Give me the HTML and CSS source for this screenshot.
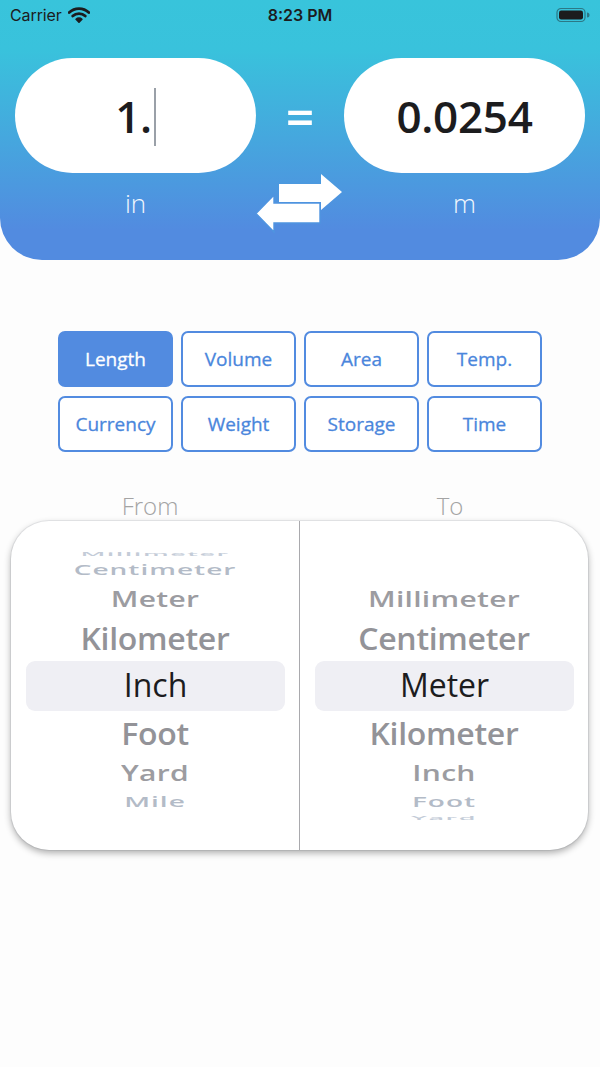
FILE: index.html
```html
<!DOCTYPE html>
<html>
<head>
<meta charset="utf-8">
<link rel="stylesheet" href="styles.css">
</head>
<body>
<div class="header">
  <div class="status">
    <div class="status-left">
      <span class="carrier">Carrier</span>
      <svg class="wifi" width="22" height="16" viewBox="0 0 22 16">
        <path d="M1.2 5.6 A14 14 0 0 1 20.8 5.6" fill="none" stroke="#1c1c1e" stroke-width="2.8" stroke-linecap="round"/>
        <path d="M4.7 9.1 A9 9 0 0 1 17.3 9.1" fill="none" stroke="#1c1c1e" stroke-width="2.8" stroke-linecap="round"/>
        <path d="M8.1 12.3 A4.2 4.2 0 0 1 13.9 12.3 L11 15.2 Z" fill="#1c1c1e" stroke="#1c1c1e" stroke-width="1.6" stroke-linejoin="round"/>
      </svg>
    </div>
    <div class="time">8:23 PM</div>
    <div class="status-right">
      <svg width="34" height="16" viewBox="0 0 34 16">
        <rect x="1" y="1.5" width="28" height="13" rx="4" fill="none" stroke="#1c1c1e" stroke-opacity="0.45" stroke-width="1.2"/>
        <rect x="3" y="3.5" width="24" height="9" rx="2.2" fill="#1c1c1e"/>
        <path d="M31 5.5 a2.4 2.4 0 0 1 0 5 z" fill="#1c1c1e" fill-opacity="0.45"/>
      </svg>
    </div>
  </div>

  <div class="values">
    <div class="pill"><span class="val">1.</span><span class="caret"></span></div>
    <div class="equals">=</div>
    <div class="pill"><span class="val">0.0254</span></div>
  </div>

  <div class="units">
    <div class="unit">in</div>
    <svg class="swap" width="88" height="62" viewBox="0 0 88 62">
      <polygon points="23,11 65,11 65,1 86,19 65,37 65,29 23,29" fill="#ffffff"/>
      <polygon points="64,30 18,30 18,22 0,40.5 18,59 18,50 64,50" fill="#ffffff" stroke="#4f94e0" stroke-width="1.4" stroke-linejoin="miter"/>
    </svg>
    <div class="unit">m</div>
  </div>
</div>

<div class="categories">
  <div class="cat active">Length</div>
  <div class="cat">Volume</div>
  <div class="cat">Area</div>
  <div class="cat">Temp.</div>
  <div class="cat">Currency</div>
  <div class="cat">Weight</div>
  <div class="cat">Storage</div>
  <div class="cat">Time</div>
</div>

<div class="dir-labels">
  <div class="dir">From</div>
  <div class="dir">To</div>
</div>

<div class="picker">
  <div class="wheel">
    <div class="row h8 o4"><span>Millimeter</span></div>
    <div class="row h24 o3"><span>Centimeter</span></div>
    <div class="row h36 o2"><span>Meter</span></div>
    <div class="row h44 o1"><span>Kilometer</span></div>
    <div class="row h50 sel"><span>Inch</span></div>
    <div class="row h46 o1"><span>Foot</span></div>
    <div class="row h32 o2"><span>Yard</span></div>
    <div class="row h24 o3"><span>Mile</span></div>
  </div>
  <div class="wheel right">
    <div class="row h8"></div>
    <div class="row h24"></div>
    <div class="row h36 o2"><span>Millimeter</span></div>
    <div class="row h44 o1"><span>Centimeter</span></div>
    <div class="row h50 sel"><span>Meter</span></div>
    <div class="row h46 o1"><span>Kilometer</span></div>
    <div class="row h32 o2"><span>Inch</span></div>
    <div class="row h24 o3"><span>Foot</span></div>
    <div class="row h8 o4"><span>Yard</span></div>
  </div>
</div>
</body>
</html>
```

FILE: styles.css
```css
* { box-sizing: border-box; }

html, body {
  margin: 0;
  padding: 0;
  background: #fdfdfd;
  font-family: "Open Sans", "Noto Sans", sans-serif;
}

body {
  width: 600px;
  height: 1067px;
  overflow: hidden;
}

.header {
  height: 260px;
  border-radius: 0 0 42px 42px;
  background: linear-gradient(180deg, #38c4db 0px, #39c2dc 50px, #528be0 230px, #528be0 260px);
  display: flex;
  flex-direction: column;
}

.status {
  height: 30px;
  display: flex;
  align-items: center;
  justify-content: space-between;
  padding: 0 10px 0 10px;
  font-family: Inter, "Liberation Sans", sans-serif;
  color: #1c1c1e;
}

.status-left {
  display: flex;
  align-items: center;
  gap: 6px;
  width: 150px;
}

.carrier {
  font-size: 16px;
  letter-spacing: -0.1px;
}

.wifi { margin-top: -1px; }

.time {
  font-size: 16px;
  font-weight: 600;
}

.status-right {
  width: 150px;
  display: flex;
  justify-content: flex-end;
}

.values {
  margin-top: 28px;
  padding: 0 15px;
  display: flex;
  align-items: center;
  justify-content: space-between;
}

.pill {
  width: 241px;
  height: 115px;
  border-radius: 58px;
  background: #ffffff;
  display: flex;
  align-items: center;
  justify-content: center;
}

.val {
  font-size: 44px;
  font-weight: 600;
  color: #1c1c1e;
  letter-spacing: -0.3px;
}

.caret {
  width: 2px;
  height: 58px;
  background: #9aa0a8;
  margin-left: 2px;
  margin-top: 2px;
}

.equals {
  color: #ffffff;
  font-size: 50px;
  font-weight: 600;
  line-height: 1;
  margin-top: 3px;
}

.units {
  padding: 0 15px;
  display: flex;
  justify-content: space-between;
  align-items: flex-start;
}

.unit {
  width: 241px;
  text-align: center;
  color: #f2f7fd;
  font-size: 26px;
  font-weight: 300;
  line-height: 30px;
  padding-top: 15px;
}

.swap {
  margin-left: -1px;
}

.categories {
  width: 484px;
  margin: 71px auto 0;
  display: grid;
  grid-template-columns: repeat(4, 115px);
  column-gap: 8px;
  row-gap: 9px;
}

.cat {
  height: 56px;
  border: 2px solid #528be0;
  border-radius: 7px;
  display: flex;
  align-items: center;
  justify-content: center;
  color: #4a86dc;
  font-size: 19px;
  font-weight: 400;
  -webkit-text-stroke: 0.3px currentColor;
  background: #ffffff;
}

.cat.active {
  background: #528be0;
  color: #ffffff;
}

.dir-labels {
  display: flex;
  margin-top: 40px;
  height: 29px;
}

.dir {
  flex: 1;
  text-align: center;
  font-size: 24px;
  font-weight: 300;
  color: #a4a4a4;
  line-height: 28px;
}

.picker {
  margin: 0 12px 0 11px;
  height: 329px;
  border-radius: 38px;
  background: #ffffff;
  box-shadow: 0 3px 7px rgba(0, 0, 0, 0.32), 0 0 0 1px rgba(120, 130, 150, 0.12);
  display: flex;
  padding-top: 28px;
  overflow: hidden;
}

.wheel {
  flex: 1;
  display: flex;
  flex-direction: column;
}

.wheel.right {
  border-left: 1px solid #a9a9ad;
  margin-top: -28px;
  padding-top: 28px;
}

.row {
  display: flex;
  align-items: center;
  justify-content: center;
  font-size: 32px;
  line-height: 1;
  font-weight: 600;
  white-space: nowrap;
}

.row span { display: inline-block; }

.h8 { height: 8px; }
.h24 { height: 24px; }
.h32 { height: 32px; }
.h36 { height: 36px; }
.h44 { height: 44px; }
.h46 { height: 46px; }
.h50 { height: 50px; }

.sel {
  margin: 0 14px 0 15px;
  background: #efeff4;
  border-radius: 9px;
  color: #1c1c1e;
  font-weight: 400;
}

.sel span { transform: translateY(-1px); }

.o1 { color: #939398; }
.o1 span { transform: scaleY(0.94); letter-spacing: -0.3px; }

.o2 { color: #9c9ca1; }
.o2 span { transform: scaleY(0.74); letter-spacing: 0.3px; font-size: 30px; }

.o3 { color: #b3bbc7; }
.o3 span { transform: scaleY(0.5); letter-spacing: 1px; font-size: 28px; }

.o4 { color: #c4ccd8; }
.o4 span { transform: scaleY(0.22); letter-spacing: 1.5px; font-size: 27px; }
```
